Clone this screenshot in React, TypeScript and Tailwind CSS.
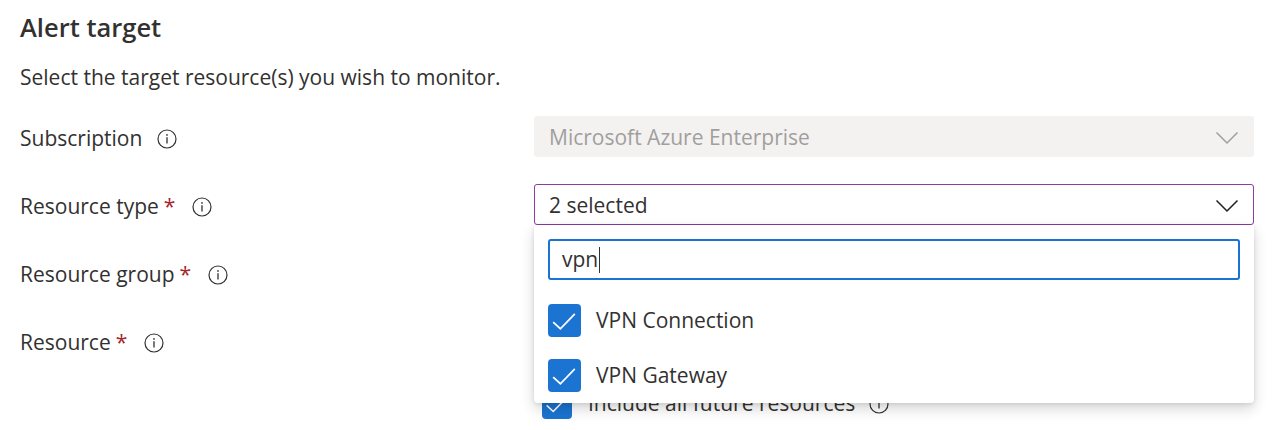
import React from 'react';

const font = { fontFamily: '"Open Sans", "Noto Sans", sans-serif' };

const InfoIcon = ({ className = '' }: { className?: string }) => (
  <svg viewBox="0 0 20 20" className={`w-5 h-5 text-[#323130] ${className}`} fill="none">
    <circle cx="10" cy="10" r="9" stroke="currentColor" strokeWidth="1.2" />
    <rect x="9.35" y="8.2" width="1.3" height="6.3" fill="currentColor" />
    <circle cx="10" cy="5.9" r="0.85" fill="currentColor" />
  </svg>
);

const Chevron = ({ color }: { color: string }) => (
  <svg viewBox="0 0 24 14" className="w-[24px] h-[14px]" fill="none">
    <path d="M1.5 1.5 L12 12 L22.5 1.5" stroke={color} strokeWidth="1.5" />
  </svg>
);

const Check = ({ className = '' }: { className?: string }) => (
  <span className={`flex items-center justify-center rounded-[4px] bg-[#1b74d1] ${className}`}>
    <svg viewBox="0 0 32 32" className="w-full h-full" fill="none">
      <path d="M5 17.5 L12 24 L26 9.5" stroke="white" strokeWidth="1.7" />
    </svg>
  </span>
);

const Label = ({ text, required }: { text: string; required?: boolean }) => (
  <div className="flex items-center pt-[5px] text-[21px] text-[#323130]">
    <span>{text}</span>
    {required && <span className="ml-[5px] text-[#a4262c]">*</span>}
    <InfoIcon className={required ? 'ml-[17px]' : 'ml-[15px]'} />
  </div>
);

export default function App() {
  return (
    <div className="bg-white w-[1273px] h-[430px] overflow-hidden pl-5 pt-[9px]" style={font}>
      <h2 className="text-[25.5px] font-semibold text-[#323130] leading-[36px]">Alert target</h2>
      <p className="mt-[18px] text-[21px] text-[#323130] leading-[28px]">
        Select the target resource(s) you wish to monitor.
      </p>

      <div className="mt-[25px] grid grid-cols-[514px_720px] gap-y-[27px] items-center">
        <Label text="Subscription" />
        <div className="h-[41px] rounded-[3px] bg-[#f3f2f1] flex items-center justify-between pt-[2px] pl-[15px] pr-[15px] text-[21px] text-[#a19f9d]">
          <span>Microsoft Azure Enterprise</span>
          <Chevron color="#a19f9d" />
        </div>

        <Label text="Resource type" required />
        <div className="relative">
          <div className="h-[41px] rounded-[3px] border border-[#8a3ca0] flex items-center justify-between pt-[2px] pl-[14px] pr-[14px] text-[21px] text-[#323130]">
            <span>2 selected</span>
            <Chevron color="#201f1e" />
          </div>
          <div className="absolute left-0 top-[41px] z-10 w-[720px] h-[178px] bg-white rounded-b-[4px] shadow-[0_6px_14px_rgba(0,0,0,0.16),0_1px_4px_rgba(0,0,0,0.1)] px-[14px] pt-[14px]">
            <div className="h-[41px] rounded-[3px] border-2 border-[#1a73d2] flex items-center pl-[12px] text-[21px] text-[#323130]">
              <span>vpn</span>
              <span className="ml-[1px] w-[1px] h-[26px] bg-[#323130]" />
            </div>
            <div className="mt-[24px] flex items-center gap-[15px] text-[21px] text-[#323130]">
              <Check className="w-[33px] h-[33px]" />
              <span>VPN Connection</span>
            </div>
            <div className="mt-[22px] flex items-center gap-[15px] text-[21px] text-[#323130]">
              <Check className="w-[33px] h-[33px]" />
              <span>VPN Gateway</span>
            </div>
          </div>
        </div>

        <Label text="Resource group" required />
        <div className="h-[41px] rounded-[3px] border border-[#8a8886]" />

        <Label text="Resource" required />
        <div className="h-[41px] rounded-[3px] border border-[#8a8886]" />

        <div />
        <div className="flex items-center pl-[8px] text-[21px] text-[#323130]">
          <Check className="w-[30px] h-[30px]" />
          <span className="ml-[16px]">Include all future resources</span>
          <InfoIcon className="ml-[14px]" />
        </div>
      </div>
    </div>
  );
}
